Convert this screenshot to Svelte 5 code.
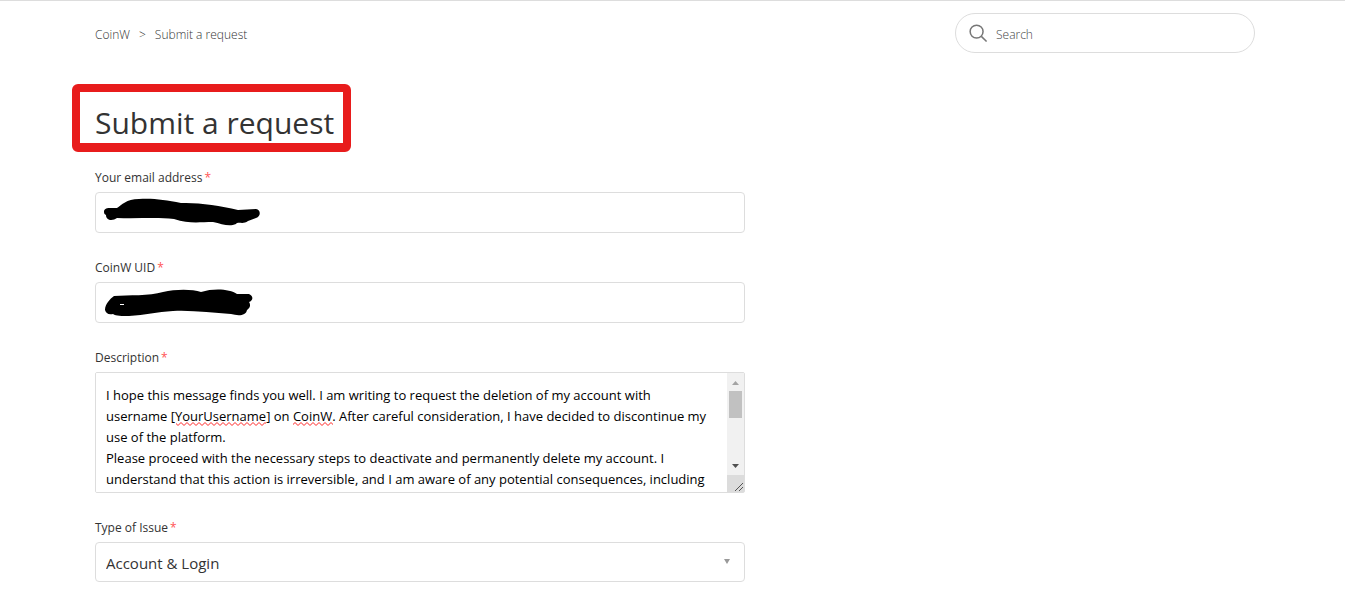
<script>
	let query = '';
	let email = '';
	let uid = '';
	let issue = 'Account & Login';
	let issues = ['Account & Login', 'Deposit & Withdrawal', 'Trading', 'Other'];
	let description =
		'I hope this message finds you well. I am writing to request the deletion of my account with\n' +
		'username [YourUsername] on CoinW. After careful consideration, I have decided to discontinue my\n' +
		'use of the platform.\n' +
		'Please proceed with the necessary steps to deactivate and permanently delete my account. I\n' +
		'understand that this action is irreversible, and I am aware of any potential consequences, including';
</script>

<main class="page">
	<nav class="sub-nav">
		<ol class="breadcrumbs">
			<li><a href="#home">CoinW</a></li>
			<li>Submit a request</li>
		</ol>
		<form class="search" role="search">
			<svg class="search-icon" viewBox="0 0 20 20" aria-hidden="true">
				<circle cx="8" cy="8" r="6.8" />
				<path d="M13 13l5.5 5.5" />
			</svg>
			<input type="search" placeholder="Search" aria-label="Search" bind:value={query} />
		</form>
	</nav>

	<h1><span class="marked">Submit a request</span></h1>

	<form class="request-form">
		<div class="field">
			<label for="email">Your email address<span class="star">*</span></label>
			<div class="control">
				<input id="email" type="text" bind:value={email} />
				<svg class="scribble" viewBox="0 0 170 39" aria-hidden="true">
					<path
						d="M9 18C10 14 15 15 22 15C27 12 31 6 44 6C58 5 70 7 86 10L91 10C107 10 126 13 143 17L161 16C166 17 166 23 161 25L153 28C148 32 143 28 141 31C134 34 127 31 118 29C104 29 94 31 79 26C61 24 42 26 22 25C18 28 11 28 11 22C9 21 9 20 9 18Z"
					/>
				</svg>
			</div>
		</div>

		<div class="field">
			<label for="uid">CoinW UID<span class="star">*</span></label>
			<div class="control">
				<input id="uid" type="text" bind:value={uid} />
				<svg class="scribble" viewBox="0 0 170 39" aria-hidden="true">
					<path
						d="M10 27C10 21 15 16 19 13C34 12 54 13 68 9C81 6 97 6 106 9C119 5 135 6 142 11L154 11C159 13 158 18 154 19C156 22 155 25 152 27C151 33 143 33 136 31C117 30 98 27 78 28C62 29 50 32 34 33C27 33 21 33 18 31C13 32 11 30 10 27Z"
					/>
					<path class="gap" d="M25 21.5H29" />
				</svg>
			</div>
		</div>

		<div class="field">
			<label for="description">Description<span class="star">*</span></label>
			<div class="control">
				<textarea id="description" spellcheck="false" bind:value={description}></textarea>
				<svg class="squiggles" viewBox="0 0 240 6" aria-hidden="true">
					<defs>
						<pattern id="wave" width="6" height="6" patternUnits="userSpaceOnUse">
							<path d="M-1.5 3L0 4.5L3 1.5L6 4.5L7.5 3" />
						</pattern>
					</defs>
					<rect x="70" width="90" height="6" fill="url(#wave)" />
					<rect x="187" width="40" height="6" fill="url(#wave)" />
				</svg>
				<svg class="scrollbar" viewBox="0 0 17 119" aria-hidden="true">
					<rect width="17" height="119" fill="#f1f1f1" />
					<path d="M5 12h7L8.5 8z" fill="#a3a3a3" />
					<rect x="2" y="18" width="13" height="27" fill="#c1c1c1" />
					<path d="M5 91h7l-3.5 4z" fill="#505050" />
					<rect y="102" width="17" height="17" fill="#dcdcdc" />
					<path d="M8 118l8-8M12 118l4-4" stroke="#555" fill="none" />
				</svg>
			</div>
		</div>

		<div class="field">
			<label for="issue">Type of Issue<span class="star">*</span></label>
			<div class="control">
				<select id="issue" bind:value={issue}>
					{#each issues as name}
						<option value={name}>{name}</option>
					{/each}
				</select>
				<svg class="arrow" viewBox="0 0 6 5" aria-hidden="true"><path d="M0 0h6L3 5z" /></svg>
			</div>
		</div>
	</form>
</main>

<style>
	:global(body) {
		background: #fff;
	}
	.page {
		box-sizing: border-box;
		border-top: 1px solid #ddd;
		padding: 12px 90px 24px 95px;
		overflow: hidden;
		font-family: 'Segoe UI', 'Open Sans', 'Noto Sans', sans-serif;
		font-size: 14px;
		color: #333;
	}
	input,
	textarea,
	select {
		box-sizing: border-box;
		margin: 0;
		font-family: inherit;
		outline: none;
	}
	.sub-nav {
		display: flex;
		justify-content: space-between;
		align-items: center;
	}
	.breadcrumbs {
		display: flex;
		margin: 0;
		padding: 2px 0 0;
		list-style: none;
		font-size: 12px;
		font-weight: 300;
	}
	.breadcrumbs a {
		color: inherit;
		text-decoration: none;
	}
	.breadcrumbs li + li::before {
		content: '>';
		margin: 0 9px;
	}
	.search {
		display: flex;
		align-items: center;
		box-sizing: border-box;
		width: 300px;
		height: 40px;
		padding: 0 13px;
		border: 1px solid #ddd;
		border-radius: 20px;
	}
	.search-icon {
		width: 19px;
		height: 19px;
		fill: none;
		stroke: #777;
		stroke-width: 1.6;
	}
	.search input {
		flex: 1;
		min-width: 0;
		border: 0;
		padding: 2px 8px 0;
		background: none;
		font-size: 12px;
		font-weight: 300;
	}
	.search input::placeholder {
		color: #444;
	}
	h1 {
		margin: 31px 0 15px -23px;
		font-size: 30px;
		font-weight: 400;
		line-height: 40px;
	}
	.marked {
		display: inline-block;
		padding: 11px 9px 0 15px;
		border: 8px solid #e81c1c;
		border-bottom-width: 9px;
		border-radius: 6px;
		line-height: 40px;
	}
	.request-form {
		max-width: 650px;
	}
	.field + .field {
		margin-top: 24px;
	}
	label {
		display: block;
		margin-bottom: 3px;
		font-size: 12px;
		line-height: 22px;
	}
	.star {
		margin-left: 2px;
		color: #f55;
	}
	.control {
		position: relative;
		display: flex;
	}
	.control input,
	.control select,
	.control textarea {
		width: 100%;
		height: 41px;
		padding: 0 10px;
		border: 1px solid #ddd;
		border-radius: 4px;
		background: #fff;
		color: #333;
		font-size: 14px;
	}
	.control select {
		appearance: none;
		height: 40px;
		padding-top: 2px;
		font-size: 15px;
	}
	.control textarea {
		height: 121px;
		padding: 12px 27px 8px 10px;
		border-radius: 2px;
		color: #000;
		font-size: 13px;
		line-height: 21px;
		resize: none;
		overflow-y: scroll;
	}
	.scribble {
		position: absolute;
		top: 1px;
		left: 0;
		width: 170px;
		height: 39px;
	}
	.gap {
		stroke: #fff;
	}
	.squiggles {
		position: absolute;
		top: 49px;
		left: 11px;
		width: 240px;
		height: 6px;
		pointer-events: none;
	}
	.squiggles path {
		fill: none;
		stroke: #f22;
	}
	.scrollbar {
		position: absolute;
		top: 1px;
		right: 1px;
		width: 17px;
		height: 119px;
	}
	.arrow {
		position: absolute;
		top: 17px;
		right: 15px;
		width: 6px;
		height: 5px;
		fill: #999;
		pointer-events: none;
	}
</style>
